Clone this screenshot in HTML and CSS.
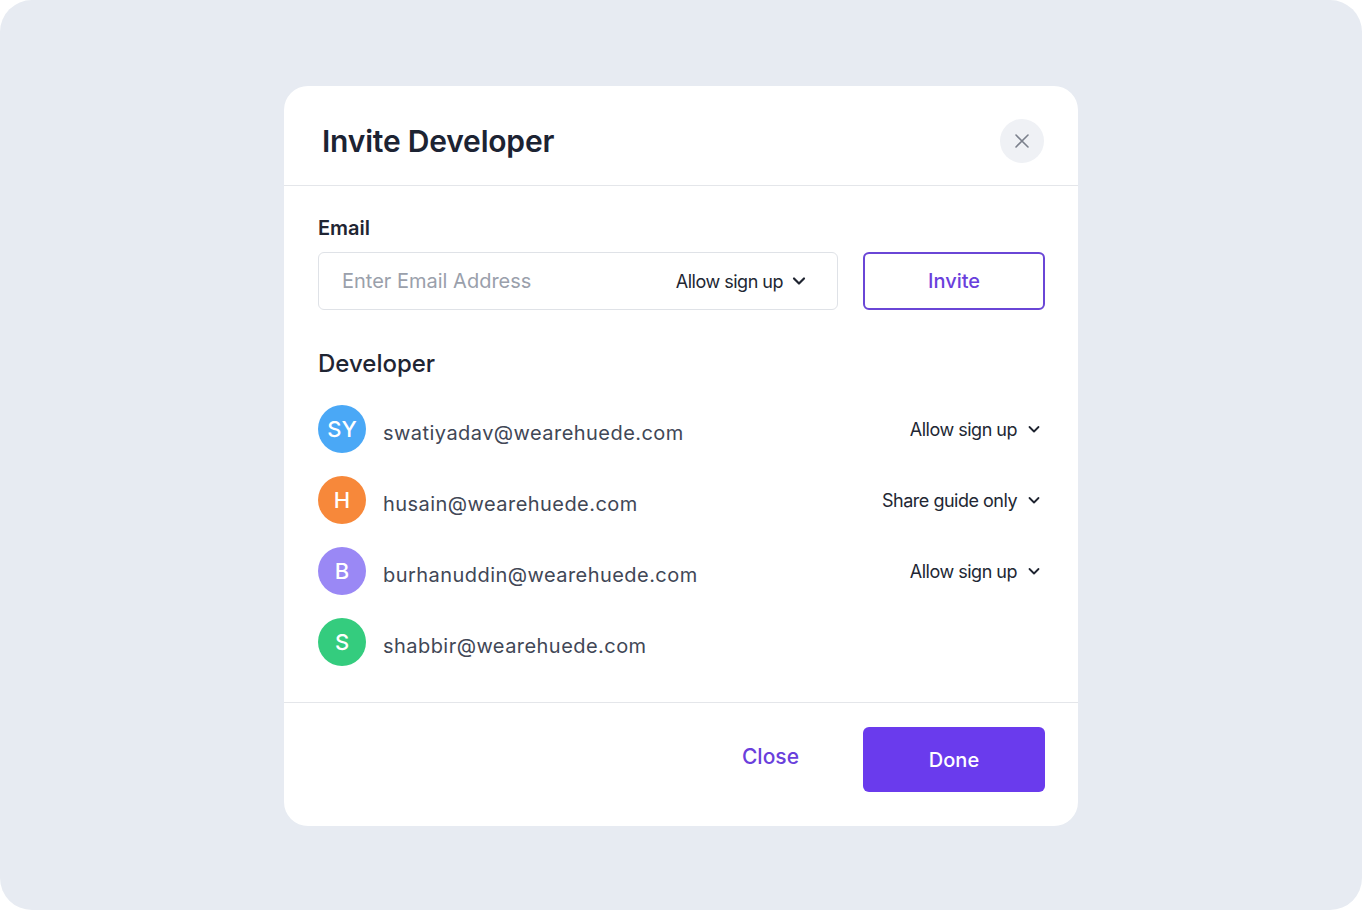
FILE: index.html
```html
<!DOCTYPE html>
<html lang="en">
<head>
<meta charset="utf-8">
<title>Invite Developer</title>
<link rel="stylesheet" href="styles.css">
</head>
<body>
<div class="screen">
  <div class="modal">
    <div class="modal-header">
      <h1 class="title">Invite Developer</h1>
      <button class="icon-close" aria-label="Close">
        <svg width="16" height="16" viewBox="0 0 16 16"><path d="M2 2L14 14M14 2L2 14" stroke="#7b808c" stroke-width="1.6" stroke-linecap="round"/></svg>
      </button>
    </div>
    <div class="modal-body">
      <div class="label">Email</div>
      <div class="input-row">
        <div class="input">
          <span class="placeholder">Enter Email Address</span>
          <span class="select select-lg">Allow sign up
            <svg width="16" height="16" viewBox="0 0 16 16"><path d="M3 5.5L8 10.5L13 5.5" fill="none" stroke="#1f2430" stroke-width="2.2" stroke-linecap="round" stroke-linejoin="round"/></svg>
          </span>
        </div>
        <button class="btn-outline">Invite</button>
      </div>
      <div class="section-title">Developer</div>
      <ul class="dev-list">
        <li class="dev">
          <span class="avatar blue">SY</span>
          <span class="dev-email">swatiyadav@wearehuede.com</span>
          <span class="select">Allow sign up
            <svg width="12" height="12" viewBox="0 0 12 12"><path d="M1.5 4L6 8.5L10.5 4" fill="none" stroke="#1f2430" stroke-width="1.8" stroke-linecap="round" stroke-linejoin="round"/></svg>
          </span>
        </li>
        <li class="dev">
          <span class="avatar orange">H</span>
          <span class="dev-email">husain@wearehuede.com</span>
          <span class="select">Share guide only
            <svg width="12" height="12" viewBox="0 0 12 12"><path d="M1.5 4L6 8.5L10.5 4" fill="none" stroke="#1f2430" stroke-width="1.8" stroke-linecap="round" stroke-linejoin="round"/></svg>
          </span>
        </li>
        <li class="dev">
          <span class="avatar purple">B</span>
          <span class="dev-email">burhanuddin@wearehuede.com</span>
          <span class="select">Allow sign up
            <svg width="12" height="12" viewBox="0 0 12 12"><path d="M1.5 4L6 8.5L10.5 4" fill="none" stroke="#1f2430" stroke-width="1.8" stroke-linecap="round" stroke-linejoin="round"/></svg>
          </span>
        </li>
        <li class="dev">
          <span class="avatar green">S</span>
          <span class="dev-email">shabbir@wearehuede.com</span>
        </li>
      </ul>
    </div>
    <div class="modal-footer">
      <button class="btn-text">Close</button>
      <button class="btn-primary">Done</button>
    </div>
  </div>
</div>
</body>
</html>
```
FILE: styles.css
```css
* { box-sizing: border-box; }
html, body { margin: 0; padding: 0; background: #ffffff; }
body { font-family: Inter, "Noto Sans", sans-serif; }
.screen {
  width: 1362px;
  height: 910px;
  background: #e7ebf2;
  border-radius: 32px;
  display: flex;
  align-items: center;
  justify-content: center;
}
.modal {
  width: 794px;
  height: 740px;
  background: #ffffff;
  border-radius: 24px;
  display: flex;
  flex-direction: column;
  margin-top: 2px;
}
.modal-header {
  height: 100px;
  display: flex;
  align-items: center;
  justify-content: space-between;
  padding: 10px 34px 0 38px;
  border-bottom: 1px solid #e4e6ea;
}
.title {
  margin: 0;
  font-size: 30px;
  font-weight: 600;
  color: #1c2333;
  letter-spacing: -0.2px;
}
.icon-close {
  width: 44px;
  height: 44px;
  border-radius: 50%;
  border: none;
  background: #eff1f5;
  display: flex;
  align-items: center;
  justify-content: center;
  padding: 0;
}
.modal-body {
  flex: 1;
  padding: 30px 33px 0 34px;
  border-bottom: 1px solid #e4e6ea;
}
.label {
  font-size: 20px;
  font-weight: 600;
  color: #1f2533;
  line-height: 24px;
  margin-bottom: 12px;
}
.input-row {
  display: flex;
  gap: 25px;
}
.input {
  flex: 1;
  height: 58px;
  border: 1px solid #dfe2e7;
  border-radius: 6px;
  display: flex;
  align-items: center;
  justify-content: space-between;
  padding: 0 30px 0 23px;
}
.placeholder {
  font-size: 20px;
  color: #9aa0ab;
  font-weight: 400;
}
.select {
  display: flex;
  align-items: center;
  gap: 11px;
  font-size: 18px;
  color: #222733;
  letter-spacing: -0.5px;
}
.select-lg { gap: 8px; }
.btn-outline {
  width: 182px;
  height: 58px;
  border: 2px solid #6a46d6;
  border-radius: 6px;
  background: #fff;
  color: #6a3fdc;
  font-family: inherit;
  font-size: 20px;
  font-weight: 500;
}
.section-title {
  margin-top: 39px;
  font-size: 24px;
  font-weight: 500;
  line-height: 30px;
  color: #1f2533;
}
.dev-list {
  list-style: none;
  margin: 26px 0 0;
  padding: 0;
  display: flex;
  flex-direction: column;
  gap: 23px;
}
.dev {
  display: flex;
  align-items: center;
  height: 48px;
  padding-right: 5px;
}
.avatar {
  width: 48px;
  height: 48px;
  border-radius: 50%;
  display: flex;
  align-items: center;
  justify-content: center;
  color: #ffffff;
  font-size: 22px;
  font-weight: 500;
  flex-shrink: 0;
}
.blue { background: #4aa8f6; }
.orange { background: #f7883a; }
.purple { background: #9a88f5; }
.green { background: #34cc7e; }
.dev-email {
  margin-left: 17px;
  margin-top: 8px;
  font-size: 20px;
  letter-spacing: 0.45px;
  color: #414756;
  flex: 1;
}
.dev .select { margin-top: 0; }
.modal-footer {
  height: 123px;
  display: flex;
  align-items: flex-start;
  justify-content: flex-end;
  padding: 24px 33px 0 34px;
}
.btn-text {
  border: none;
  background: none;
  color: #6a3fdc;
  font-family: inherit;
  font-size: 21px;
  font-weight: 500;
  padding: 0;
  margin: 17px 64px 0 0;
}
.btn-primary {
  width: 182px;
  height: 65px;
  border: none;
  border-radius: 6px;
  background: #6a3bed;
  color: #ffffff;
  font-family: inherit;
  font-size: 20px;
  font-weight: 500;
}
```
